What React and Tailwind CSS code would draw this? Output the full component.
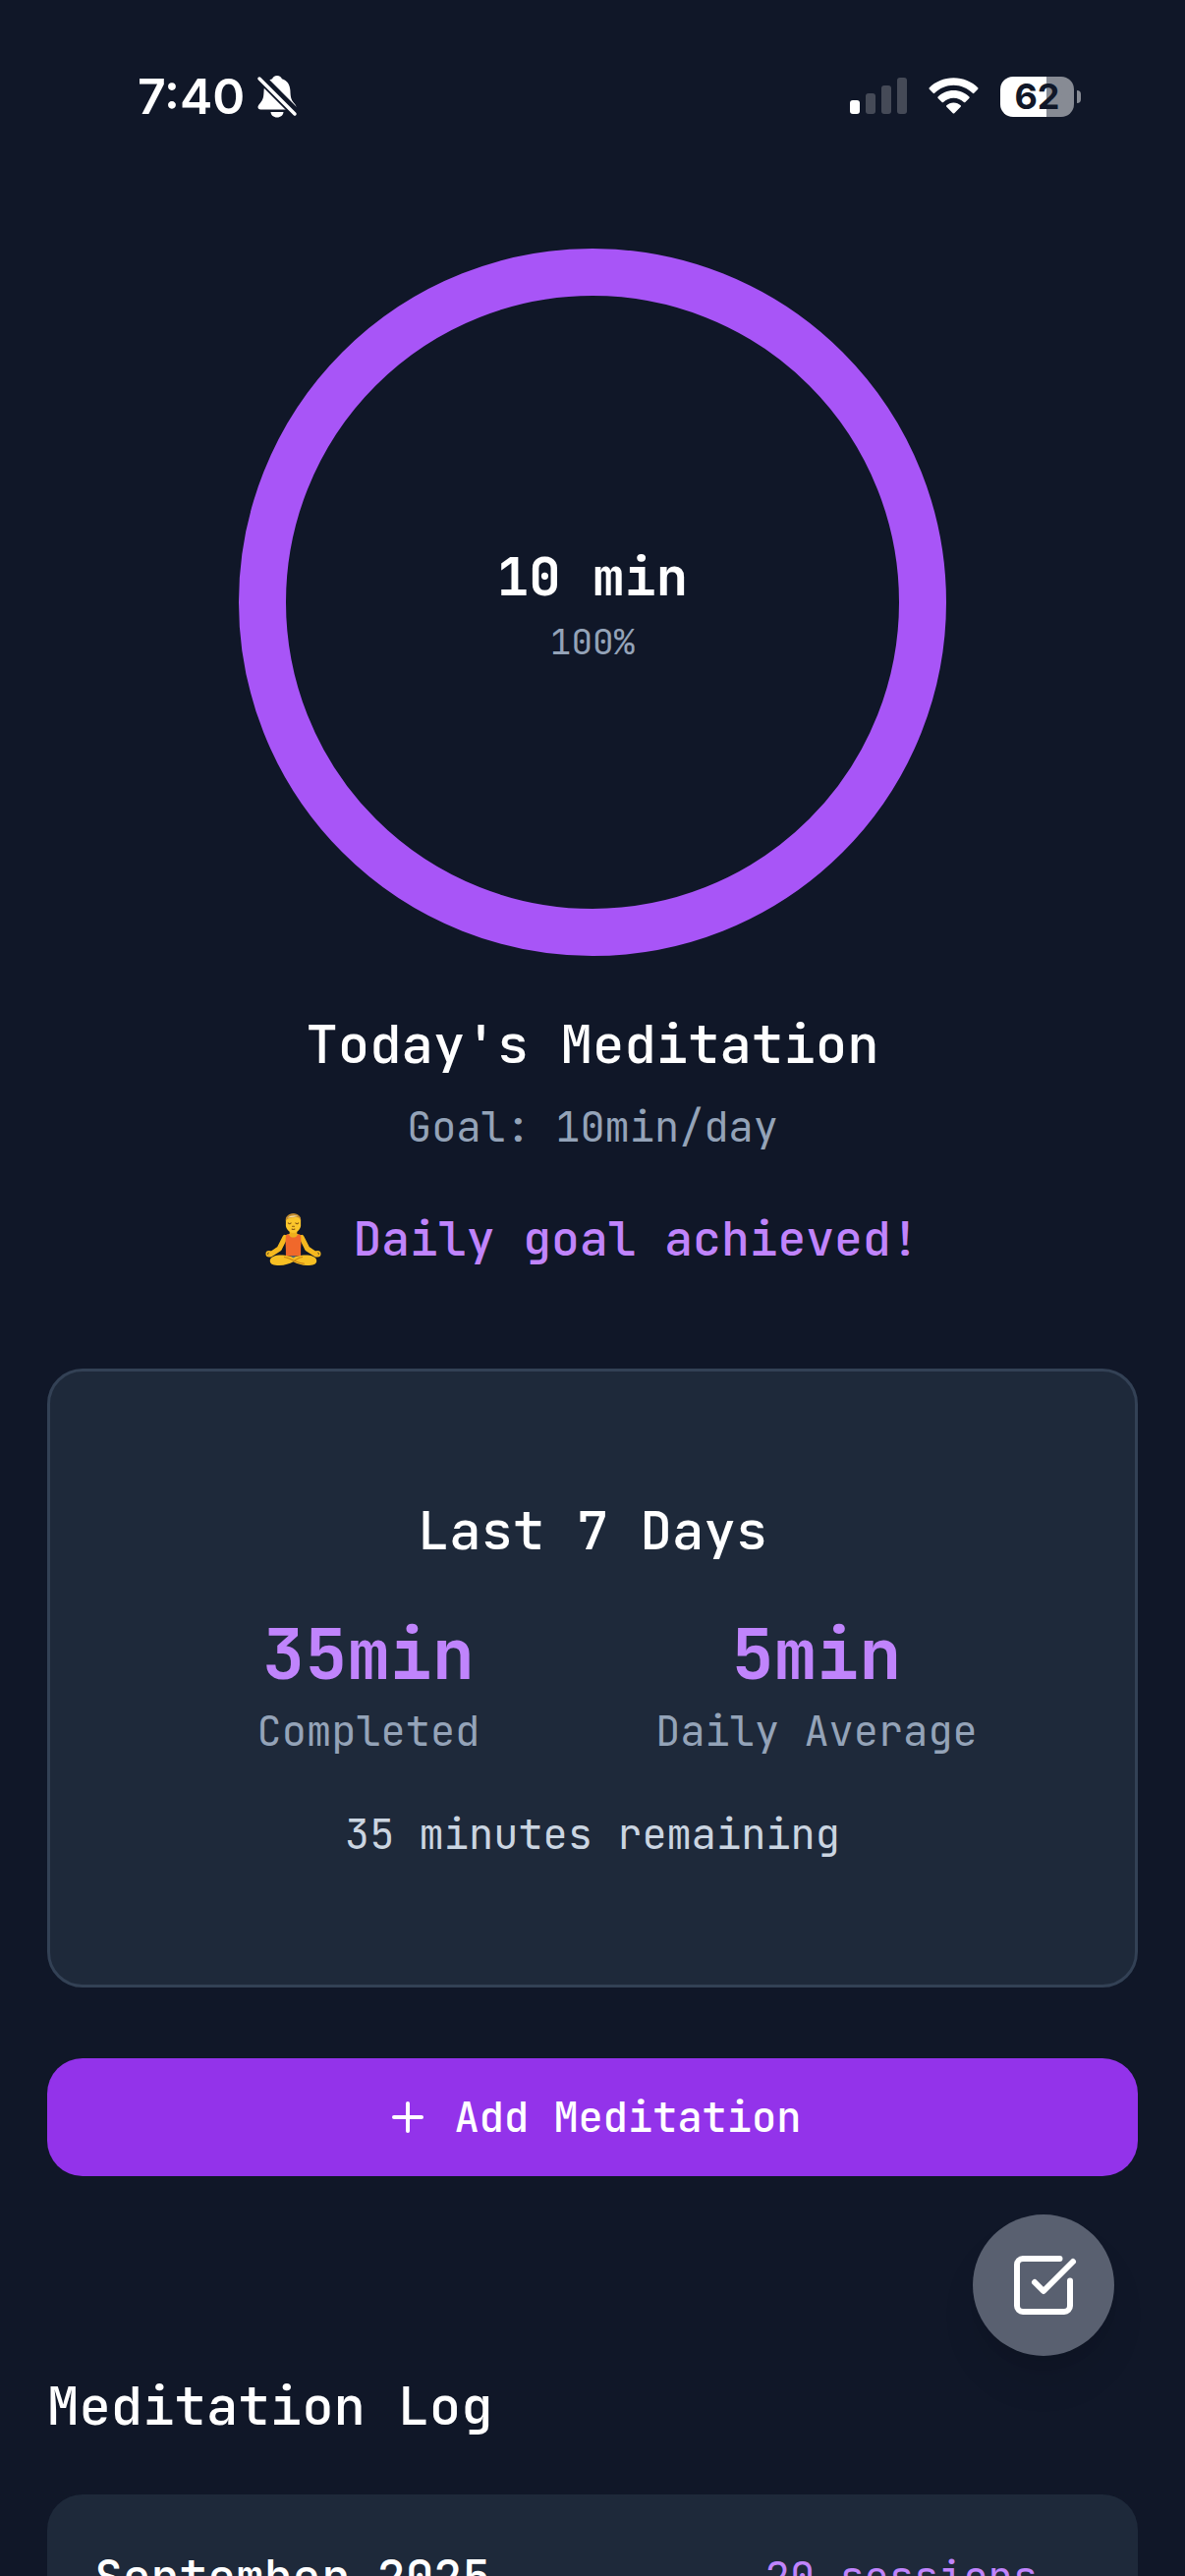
import { Plus } from "lucide-react";

function BellOff() {
  return (
    <svg viewBox="0 0 42 46" className="h-[46px] w-[42px]" aria-label="Silent mode">
      <path
        fill="#fff"
        d="M21 2c-2.500 0-4.300 1.300-4.900 3.200C10.500 7 8 11 7.600 17c-.3 6.500-.5 9-3.800 13C2 32 1.500 33 1.500 34c0 1.400 1 2.400 2.800 2.400h33.400c1.800 0 2.800-1 2.800-2.400 0-1-.5-2-2.300-4-3.300-4-3.500-6.500-3.800-13C34 11 31.500 7 25.900 5.200 25.300 3.300 23.500 2 21 2zM14.500 39h13c-.3 3.200-2.900 5.500-6.500 5.500s-6.200-2.300-6.500-5.500z"
      />
      <path d="M2 2L44 44" stroke="#101728" strokeWidth="10" />
      <path d="M3 5L39 41" stroke="#fff" strokeWidth="3.500" strokeLinecap="round" />
    </svg>
  );
}

function Signal() {
  return (
    <svg viewBox="0 0 58 38" className="h-[38px] w-[58px]" aria-label="Signal">
      <rect x="0" y="23" width="10" height="14" rx="3" fill="#fff" />
      <g fill="#fff" opacity=".22">
        <rect x="16" y="16" width="10" height="21" rx="3" />
        <rect x="32" y="8" width="10" height="29" rx="3" />
        <rect x="48" y="0" width="10" height="37" rx="3" />
      </g>
    </svg>
  );
}

function Wifi() {
  return (
    <svg viewBox="0 0 52 38" className="h-[38px] w-[51px]" aria-label="Wi-Fi" fill="#fff">
      <path d="M26 0C16 0 7 4 .8 10.200c-.5.500-.5 1 0 1.500l4 4.100c.5.500 1 .500 1.500 0C11.500 10.800 18.400 7.600 26 7.600s14.500 3.200 19.700 8.200c.5.500 1 .500 1.500 0l4-4.100c.5-.5.500-1 0-1.500C45 4 36 0 26 0z" />
      <path d="M26 13c-6.300 0-12 2.500-16.200 6.500-.5.500-.5 1 0 1.500l4.100 4.100c.5.500 1 .500 1.500 0 2.800-2.600 6.500-4.300 10.600-4.300s7.800 1.700 10.600 4.300c.5.500 1 .500 1.500 0l4.100-4.100c.5-.5.500-1 0-1.500C38 15.500 32.300 13 26 13z" />
      <path d="M26 25.500c-2.900 0-5.500 1.100-7.300 2.900-.5.500-.5 1 0 1.500l6.500 6.600c.5.500 1.100.500 1.600 0l6.500-6.600c.5-.5.500-1 0-1.500-1.800-1.800-4.400-2.900-7.300-2.900z" />
    </svg>
  );
}

function Battery() {
  return (
    <div className="flex items-center gap-[3px]" aria-label="Battery 62%">
      <div className="flex h-[41px] w-[75px] items-center justify-center rounded-[13px] bg-linear-to-r from-white from-63% to-[#878b94] to-63% font-[Inter] text-[36px] leading-none font-bold text-[#101728]">
        62
      </div>
      <div className="h-[13px] w-1 rounded-r-full bg-[#878b94]" />
    </div>
  );
}

function StatusBar() {
  return (
    <div className="flex h-[205px] items-start justify-between pt-[74px] pr-[106px] pl-[140px] text-white">
      <div className="flex h-12 items-center gap-3">
        <span className="font-[Inter] text-[50px] leading-12 font-semibold">7:40</span>
        <BellOff />
      </div>
      <div className="flex h-12 items-center gap-[22px]">
        <Signal />
        <Wifi />
        <Battery />
      </div>
    </div>
  );
}

function GoalRing({ label, percent }) {
  const length = 2 * Math.PI * 336;
  return (
    <div className="relative size-[720px]">
      <svg viewBox="0 0 720 720" className="size-full -rotate-90" aria-hidden="true">
        <circle
          cx="360"
          cy="360"
          r="336"
          fill="none"
          stroke="#a855f7"
          strokeWidth="48"
          strokeDasharray={length}
          strokeDashoffset={length * (1 - percent / 100)}
        />
      </svg>
      <div className="absolute inset-0 flex flex-col items-center justify-center pb-1">
        <span className="text-[54px] leading-[84px] font-bold text-white">{label}</span>
        <span className="text-[36px] leading-[48px] text-[#94a3b8]">{percent}%</span>
      </div>
    </div>
  );
}

function MeditatingPerson() {
  return (
    <svg viewBox="0 -2 60 60" className="size-[57px]" aria-label="Person meditating">
      <path d="M21 26L15 38 6 44M39 26l6 12 9 6" fill="none" stroke="#f5b81f" strokeWidth="5.500" strokeLinecap="round" strokeLinejoin="round" />
      <circle cx="4" cy="43.500" r="2.500" fill="none" stroke="#f5b81f" strokeWidth="2" />
      <circle cx="56" cy="43.500" r="2.500" fill="none" stroke="#f5b81f" strokeWidth="2" />
      <path d="M26 16h8v6l5 2v3H21v-3l5-2z" fill="#eeb01c" />
      <path d="M22.500 23c1-.5 2-.5 3 0 1 4 8 4 9 0 1-.5 2-.5 3 0 1.500 7 .5 12 .5 16v7H22v-7c0-4-1-9 .5-16z" fill="#f0682b" />
      <path d="M5 51c0-5 8-7 16-6l9 2 9-2c8-1 16 1 16 6 0 4-4 5-10 5s-11-2-15-4c-4 2-9 4-15 4S5 55 5 51z" fill="#f7bf23" />
      <path d="M20 47c5 0 14 7 22 7M40 47c-4 0-6 2-9 4" fill="none" stroke="#c98213" strokeWidth="1.200" />
      <path d="M27 46h6l-3 2z" fill="#4a7186" />
      <path d="M22 8c0-4 3-7 8-7s8 3 8 7v5c0 4-4 8-8 8s-8-4-8-8z" fill="#fbc62b" />
      <path d="M22 8c-1-4 3-8 8-8s9 4 8 8c-1-3-3-4-5-4-3 1-8 0-11 4z" fill="#c08a2e" />
      <path d="M24 5c3-3 8-3 11-2-3 1-6 1-11 2z" fill="#f6e3b0" />
      <path d="M24.500 10.500c1 1 2 1 3 0M32.500 10.500c1 1 2 1 3 0M28.500 17c1 .600 2 .600 3 0M29 14h2" fill="none" stroke="#8a5a12" strokeWidth="1.200" strokeLinecap="round" />
    </svg>
  );
}

function Stat({ value, label }) {
  return (
    <div className="flex flex-col items-center">
      <dt className="order-last text-[42px] leading-[60px] text-[#94a3b8]">{label}</dt>
      <dd className="text-[72px] leading-[96px] font-bold text-[#c084fc]">{value}</dd>
    </div>
  );
}

export default function App() {
  return (
    <div className="relative h-screen overflow-hidden bg-[#101728] font-['JetBrains_Mono','DejaVu_Sans_Mono',monospace]">
      <StatusBar />
      <main className="flex flex-col px-12 pt-12">
        <section className="flex flex-col items-center">
          <GoalRing label="10 min" percent={100} />
          <h1 className="mt-12 text-[54px] leading-[84px] font-medium text-white">Today's Meditation</h1>
          <p className="mt-3 text-[42px] leading-[60px] text-[#94a3b8]">Goal: 10min/day</p>
          <p className="mt-12 flex items-center gap-8 text-[48px] leading-[72px] font-medium text-[#c084fc]">
            <MeditatingPerson />
            Daily goal achieved!
          </p>
        </section>

        <section className="mt-24 flex flex-col items-center rounded-[36px] border-3 border-[#334155] bg-[#1e293a] px-[120px] pt-[120px] pb-[123px]">
          <h2 className="text-[54px] leading-[84px] font-medium text-white">Last 7 Days</h2>
          <dl className="mt-9 grid w-full grid-cols-2 gap-12">
            <Stat value="35min" label="Completed" />
            <Stat value="5min" label="Daily Average" />
          </dl>
          <p className="mt-[45px] text-[42px] leading-[60px] text-[#cbd5e1]">35 minutes remaining</p>
        </section>

        <button
          type="button"
          className="mt-[72px] flex h-[120px] items-center justify-center gap-6 rounded-[36px] bg-[#9333ea] text-[42px] leading-[60px] font-medium text-white"
        >
          <Plus className="size-12" strokeWidth={2} />
          Add Meditation
        </button>

        <section className="mt-48">
          <h2 className="text-[54px] leading-[84px] font-medium text-white">Meditation Log</h2>
          <div className="mt-12 flex items-center justify-between rounded-[36px] bg-[#1e293a] py-12 pr-[102px] pl-12">
            <h3 className="text-[48px] leading-[72px] font-medium text-white">September 2025</h3>
            <span className="text-[42px] leading-[60px] text-[#c084fc]">20 sessions</span>
          </div>
        </section>
      </main>

      <button
        type="button"
        aria-label="Open checklist"
        className="absolute right-[72px] bottom-[224px] flex size-36 items-center justify-center rounded-full bg-[#596070] text-white shadow-[0_30px_45px_-9px_rgba(0,0,0,0.1),0_12px_18px_-12px_rgba(0,0,0,0.1)]"
      >
        <svg viewBox="0 0 24 24" className="size-[72px]" fill="none" stroke="currentColor" strokeWidth="2" strokeLinecap="round" strokeLinejoin="round">
          <path d="M21 10.500V19a2 2 0 0 1-2 2H5a2 2 0 0 1-2-2V5a2 2 0 0 1 2-2h12.500" />
          <path d="m9 11 3 3L22 4" />
        </svg>
      </button>
    </div>
  );
}
